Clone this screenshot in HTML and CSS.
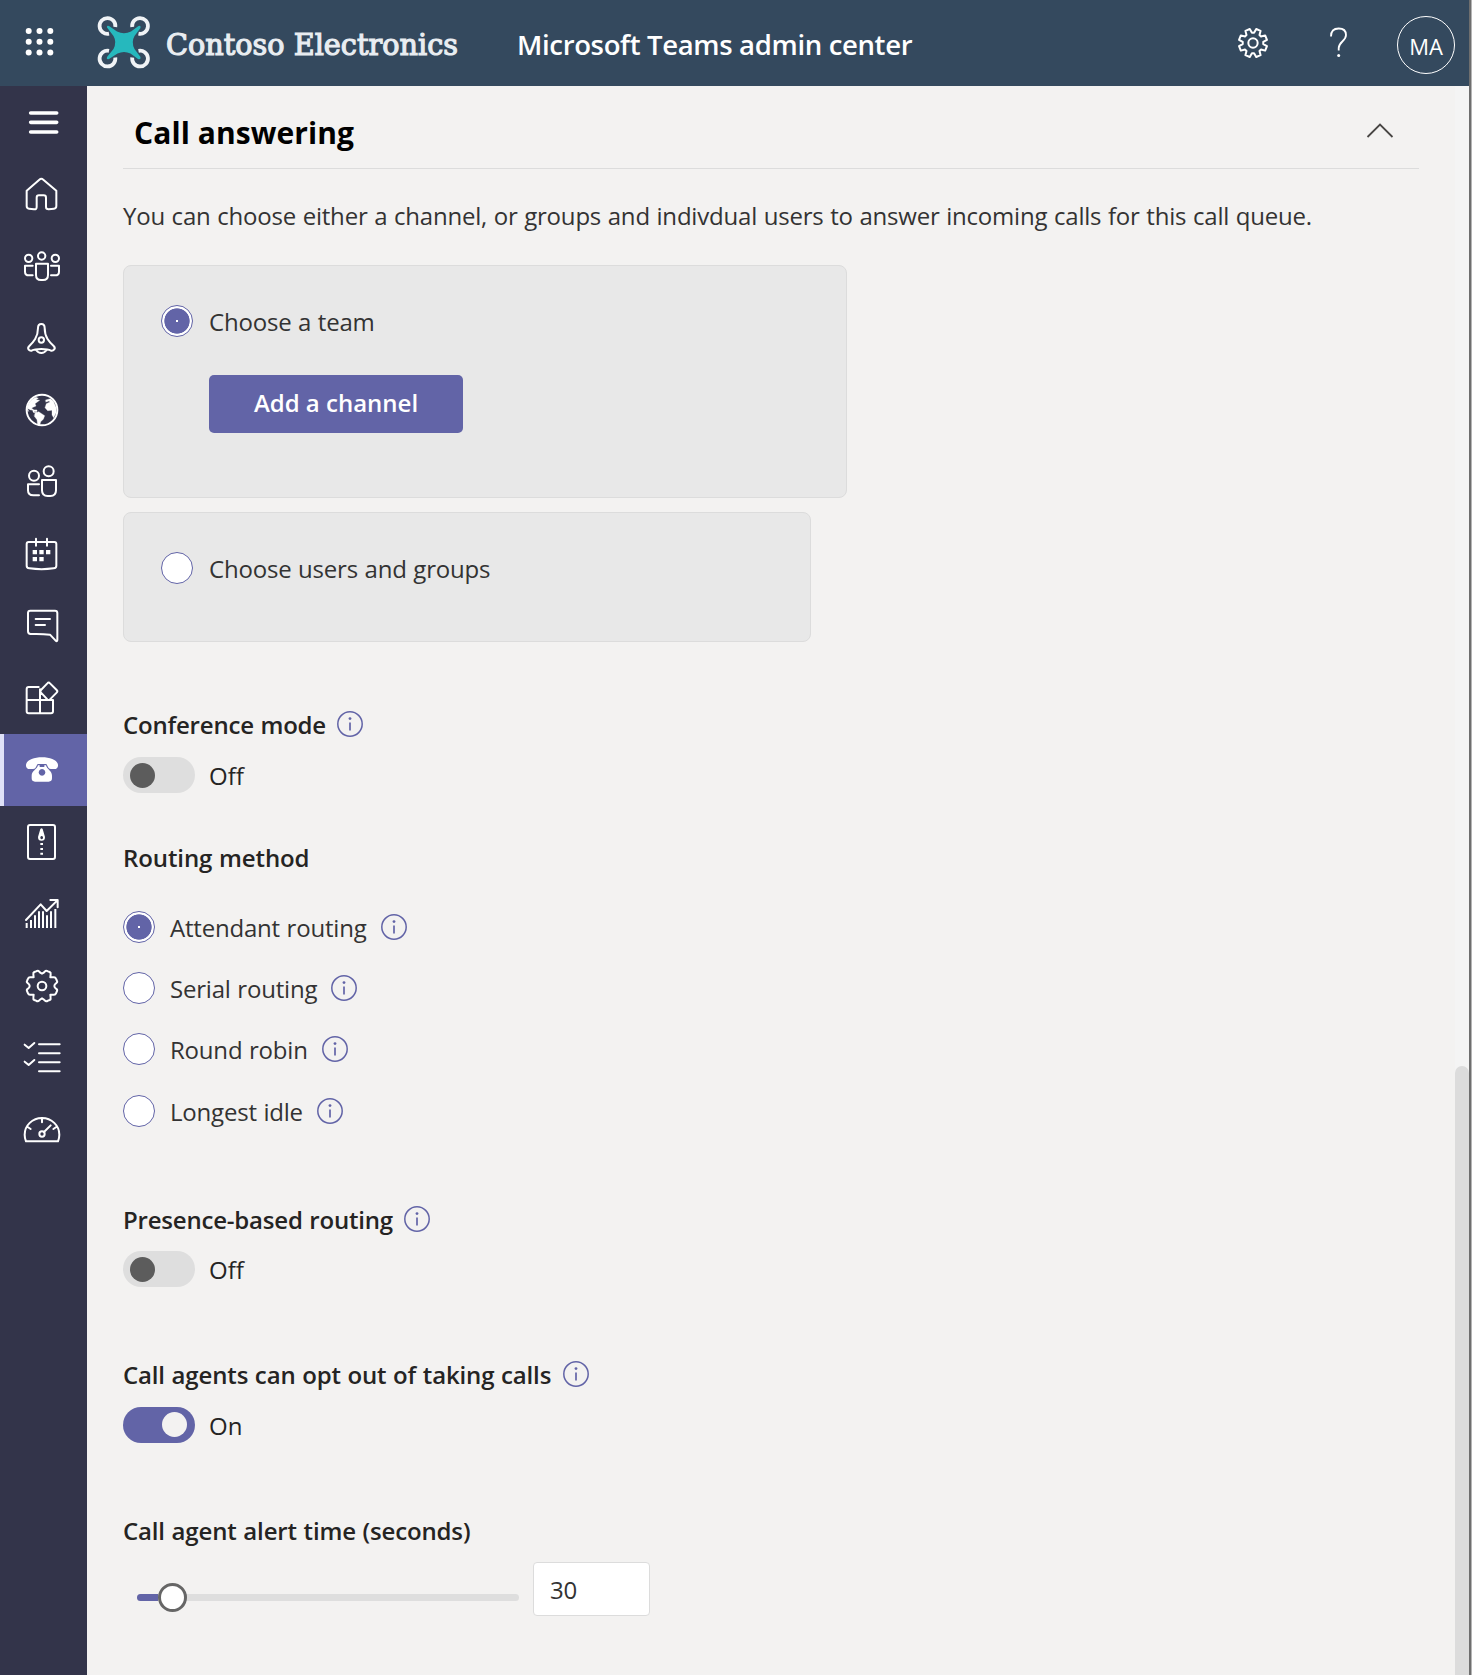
FILE: index.html
```html
<!DOCTYPE html>
<html lang="en">
<head>
<meta charset="utf-8">
<title>Microsoft Teams admin center</title>
<link rel="stylesheet" href="styles.css">
</head>
<body>
<svg width="0" height="0" class="defs"><defs>
<symbol id="info" viewBox="0 0 26 26"><circle cx="13" cy="13" r="12.2" fill="none" stroke="#6264a7" stroke-width="1.5"/><circle cx="13" cy="7.6" r="1.4" fill="#6264a7"/><path d="M13 11.5v8" stroke="#6264a7" stroke-width="1.7"/></symbol>
</defs></svg>
<div class="app">
<header class="topbar">
  <svg class="waffle" viewBox="0 0 87 86"><g fill="#fff"><circle cx="28.7" cy="31" r="3"/><circle cx="39.5" cy="31" r="3"/><circle cx="50.3" cy="31" r="3"/><circle cx="28.7" cy="41.7" r="3"/><circle cx="39.5" cy="41.7" r="3"/><circle cx="50.3" cy="41.7" r="3"/><circle cx="28.7" cy="52.5" r="3"/><circle cx="39.5" cy="52.5" r="3"/><circle cx="50.3" cy="52.5" r="3"/></g></svg>
  <svg class="logo" viewBox="0 0 400 86">
    <g fill="none" stroke="#f0f3f6" stroke-width="3.8"><path d="M22 33.700a7.900 7.900 0 1 1 6.300-6.700"/><path d="M51.500 33.700a7.900 7.900 0 1 0-6.300-6.700"/><path d="M22 50.800a7.900 7.900 0 1 0 6.300 6.700"/><path d="M51.500 50.800a7.900 7.900 0 1 1-6.300 6.700"/></g>
    <path fill="#26b8bd" d="M20 27.500Q19.500 25 22 26L30 31.500Q37 35 44 31.500L51.500 26Q54 25 53.500 28L47.500 36Q44 42 47.500 49L53.500 57Q54 60 51 59L43.500 53.500Q37 50.500 30.500 53.500L22 59Q19 60 20 57L26.500 49Q30 42 26.500 36Z"/>
    <text class="logo-text" x="79" y="54.500" textLength="292" lengthAdjust="spacingAndGlyphs">Contoso Electronics</text>
  </svg>
  <div class="product">Microsoft Teams admin center</div>
  <svg class="top-gear" viewBox="-48 -48 96 96"><path d="M3.200-30.800 9.700-41.900 22.800-36.500 19.500-24.100 24.100-19.500 36.500-22.800 41.900-9.700 30.800-3.200V3.200L41.900 9.700 36.500 22.800 24.100 19.500 19.500 24.100 22.800 36.500 9.700 41.900 3.200 30.800H-3.200L-9.700 41.900-22.800 36.500-19.500 24.100-24.100 19.500-36.500 22.800-41.900 9.700-30.800 3.200V-3.200L-41.900-9.700-36.500-22.800-24.100-19.500-19.500-24.100-22.800-36.500-9.700-41.900-3.200-30.800Z"/><circle r="14"/></svg>
  <svg class="help" viewBox="0 0 20 32"><path d="M2 9.500C2 4 5 1.500 9.700 1.500c4.500 0 7.300 2.500 7.300 6.500 0 6-7.300 7-7.300 13v2.500"/><circle cx="9.700" cy="28.500" r="1.500"/></svg>
  <div class="avatar">MA</div>
</header>
<nav class="rail">
  <svg class="item" viewBox="0 0 261 216"><path stroke-width="11" d="M92 81h78M92 109h78M92 138h78"/></svg>
  <svg class="item" viewBox="0 0 261 216"><path d="M80 98 118 65q6-5 12 0l39 33v46q0 7-7 8l-16 2q-8 0-8-7v-28q0-7-7-7h-14q-7 0-7 7v28q0 8-8 7l-15-2q-7-1-7-8Z"/></svg>
  <svg class="item" viewBox="0 0 261 216"><circle cx="86" cy="85" r="11"/><circle cx="125" cy="78" r="11"/><circle cx="166" cy="85" r="11"/><path d="M108 101h36v34q0 15-15 15h-6q-15 0-15-15ZM98 107H75v18q0 11 12 11h11M153 107h24v18q0 11-12 11h-12"/></svg>
  <svg class="item" viewBox="0 0 261 216"><path d="M114 78q0-12 10-12t10 12c0 28 14 42 27 54q6 6 1 11-3 4-9 3-9-5-29-5t-29 5q-6 1-9-3-4-5 2-11c12-12 26-26 26-54ZM109 145q5 8 15 8t15-8"/><circle cx="124" cy="114" r="8"/></svg>
  <svg class="item" viewBox="0 0 261 216"><circle cx="126" cy="108" r="46"/><path class="solid" d="M82 102q3-23 26-32l7 3-7 4 11 2-14 10 3 7-12 5-2 8-8-5-5 4 5 4ZM105 118l11-5 9 6 9 6-4 11-8 7-3 12-6-2-2-16-8-10ZM137 78l14-4 9 7 8 19v17l-7 14-5-8v-14l-13 1-8-9 4-12 11-5-3-3-9 3Z"/><path stroke-width="4" d="M88 104l10 2 3 8 9 0M100 109l10 0"/></svg>
  <svg class="item" viewBox="0 0 261 216"><circle cx="102" cy="89" r="15"/><circle cx="146" cy="76" r="15"/><path d="M126 102h42v31q0 17-17 17h-8q-17 0-17-17ZM117 115H84v18q0 15 16 15h17"/></svg>
  <svg class="item" viewBox="0 0 261 216"><path d="M86 72h77q6 0 6 6v65q0 7-8 8-36 5-73 0-8-1-8-8V78q0-6 6-6ZM108 62v21M141 62v21"/><path class="fill" d="M98 96h13v13H98zM118 96h13v13h-13zM138 96h13v13h-13zM98 117h13v13H98zM118 117h13v13h-13z"/></svg>
  <svg class="item" viewBox="0 0 261 216"><path d="M91 62h74q7 0 7 7v81q0 6-5 2l-17-18q-23-3-58-2-8 0-8-8V69q0-7 7-7ZM107 87h43M107 105h28"/></svg>
  <svg class="item" viewBox="0 0 261 216"><path d="M116 75H86q-6 0-6 6v67q0 6 6 6h67q6 0 6-6v-34H80M120 82v72M142 64q4-5 8 0l20 20q4 4 0 8l-20 20q-4 4-8 0l-19-20q-4-4 0-8Z"/></svg>
  <svg class="item active" viewBox="0 0 261 216"><path class="fill" d="M78 92c2-14 24-22 48-22s46 8 48 22c1 9-4 13-12 13h-9c-7 0-8-5-11-10-1-3-2-5-6-5h-20c-4 0-5 2-6 5-3 5-4 10-11 10h-9c-8 0-13-4-12-13Z"/><path class="fill" fill-rule="evenodd" d="M114 94h5v5h14v-5h5c3 12 18 17 18 31v8q0 10-10 10h-41q-10 0-10-10v-8c0-14 16-19 19-31ZM126 105a10 10 0 1 0 .1 0Z"/></svg>
  <svg class="item" viewBox="0 0 261 216"><rect x="84" y="57" width="81" height="102" rx="6"/><path class="fill" fill-rule="evenodd" d="M121 69q4-5 7 0l7 24a10 11 0 1 1-21 0ZM125 90a4 5 0 1 0 .1 0ZM121 111h8v6h-8zM121 126h8v6h-8zM121 140h8v6h-8z"/></svg>
  <svg class="item" viewBox="0 0 261 216"><path d="M78 126 122 79l18 20 32-32M151 66h22v22"/><path d="M80 150v-15M93 150v-24M105 150v-38M117 150v-50M129 150v-50M141 150v-38M153 150v-50M166 150V93" stroke-linecap="butt"/></svg>
  <svg class="item" viewBox="0 0 261 216"><g transform="translate(126 108)"><path d="M0-37Q6-40 9-44 12-48 18-44L23-42Q27-40 26-35L25-26 34-26Q40-27 42-22L45-15Q47-11 42-8 37-4 37 0 37 4 42 8 47 11 45 15L42 22Q40 27 34 26L25 26 26 35Q27 40 23 42L18 44Q12 48 9 44 6 40 0 37-6 40-9 44-12 48-18 44L-23 42Q-27 40-26 35L-25 26-34 26Q-40 27-42 22L-45 15Q-47 11-42 8-37 4-37 0-37-4-42-8-47-11-45-15L-42-22Q-40-27-34-26L-25-26-26-35Q-27-40-23-42L-18-44Q-12-48-9-44-6-40 0-37Z"/><circle r="13"/></g></svg>
  <svg class="item" viewBox="0 0 261 216"><path d="M74 68l12 10 17-15M74 119l12 10 17-15M117 67h62M117 94h62M117 121h62M117 148h62"/></svg>
  <svg class="item" viewBox="0 0 261 216"><path d="M78 142q-4-10-4-20a52 50 0 0 1 104 0q0 10-4 20ZM126 74v11M83 99l9 6M169 99l-9 6M132 114l20-20"/><circle cx="126" cy="120" r="8"/></svg>
</nav>
<main class="content">
  <div class="section-head"><h1>Call answering</h1><svg class="chevron" viewBox="0 0 28 16"><path d="M1.500 14 14 1.500 26.500 14"/></svg></div>
  <p class="intro">You can choose either a channel, or groups and indivdual users to answer incoming calls for this call queue.</p>
  <div class="card card-team">
    <div class="choice"><i class="radio on"></i><span>Choose a team</span></div>
    <button class="btn">Add a channel</button>
  </div>
  <div class="card card-users">
    <div class="choice"><i class="radio"></i><span>Choose users and groups</span></div>
  </div>
  <div class="label conference"><span>Conference mode</span><svg class="info"><use href="#info"/></svg></div>
  <div class="toggle-row"><i class="toggle"></i><span>Off</span></div>
  <div class="label routing"><span>Routing method</span></div>
  <div class="methods">
    <div class="choice"><i class="radio on"></i><span>Attendant routing</span><svg class="info"><use href="#info"/></svg></div>
    <div class="choice"><i class="radio"></i><span>Serial routing</span><svg class="info"><use href="#info"/></svg></div>
    <div class="choice"><i class="radio"></i><span>Round robin</span><svg class="info"><use href="#info"/></svg></div>
    <div class="choice"><i class="radio"></i><span>Longest idle</span><svg class="info"><use href="#info"/></svg></div>
  </div>
  <div class="label presence"><span>Presence-based routing</span><svg class="info"><use href="#info"/></svg></div>
  <div class="toggle-row"><i class="toggle"></i><span>Off</span></div>
  <div class="label optout"><span>Call agents can opt out of taking calls</span><svg class="info"><use href="#info"/></svg></div>
  <div class="toggle-row"><i class="toggle on"></i><span>On</span></div>
  <div class="label alert"><span>Call agent alert time (seconds)</span></div>
  <div class="slider-row"><div class="slider"><i class="slider-fill"></i><i class="thumb"></i></div><div class="num">30</div></div>
</main>
<div class="scroll"><i class="scroll-thumb"></i></div>
<div class="edge"></div>
</div>
</body>
</html>
```
FILE: styles.css
```css
* { box-sizing: border-box; }
body { margin: 0; background: #f3f2f1; font-family: "Open Sans", "Noto Sans", sans-serif; font-size: 24px; line-height: 34px; letter-spacing: -.2px; word-spacing: .6px; color: #333; }
.defs { position: absolute; }
.app { display: grid; grid-template-columns: 87px 1fr 14px 3px; grid-template-rows: 86px 1589px; width: 1472px; height: 1675px; overflow: hidden; }
.topbar { grid-column: 1 / 4; display: flex; align-items: center; background: #34495e; color: #fff; }
.waffle { width: 87px; height: 86px; flex: none; }
.logo { width: 400px; height: 86px; flex: none; }
.logo-text { font: 30px "DejaVu Serif", serif; letter-spacing: 0; word-spacing: 0; fill: #e9edf1; stroke: #e9edf1; stroke-width: 1.2px; }
.product { width: 734px; margin-left: 30px; font-size: 27.5px; font-weight: 600; letter-spacing: -.34px; word-spacing: 0; white-space: nowrap; padding-top: 3px; }
.top-gear { width: 32px; height: 32px; flex: none; margin: -1px 0 0 -14px; fill: none; stroke: #fff; stroke-width: 6; stroke-linejoin: round; }
.help { width: 20px; height: 32px; flex: none; margin-left: 60px; fill: none; stroke: #fff; stroke-width: 1.8; }
.help circle { fill: #fff; stroke: none; }
.avatar { width: 58px; height: 58px; flex: none; margin: 4px 0 0 48px; border: 1.5px solid #fff; border-radius: 50%; font-size: 22px; letter-spacing: 0; line-height: 58px; text-align: center; }
.rail { grid-column: 1; background: #33344a; display: flex; flex-direction: column; }
.item { width: 87px; height: 72px; flex: none; fill: none; stroke: #fff; stroke-width: 6; stroke-linecap: round; stroke-linejoin: round; }
.item .fill { fill: #fff; stroke: none; }
.item .solid { fill: #fff; stroke-width: 1; }
.active { background: linear-gradient(90deg, #dfe1f8 4px, #6264a7 4px); }
.content { width: 1296px; margin-left: 36px; }
.section-head { display: flex; justify-content: space-between; height: 83px; border-bottom: 1px solid #dcdcdc; padding: 30px 25px 0 11px; }
h1 { margin: 0; font-size: 30px; line-height: 34px; font-weight: 700; letter-spacing: .08px; word-spacing: 0; color: #000; }
.chevron { width: 28px; height: 16px; margin-top: 7px; fill: none; stroke: #484644; stroke-width: 1.8; }
.intro { margin: 30px 0 0; white-space: nowrap; }
.card { background: #e8e8e8; border: 1px solid #dcdcdc; border-radius: 8px; padding: 38px 0 0 37px; }
.card-team { width: 724px; height: 233px; margin-top: 32px; }
.card-users { width: 688px; height: 130px; margin-top: 14px; }
.choice { display: flex; align-items: center; height: 34px; white-space: nowrap; }
.choice span, .label span, .toggle-row span { padding-top: 2px; }
.radio { width: 32px; height: 32px; flex: none; margin-right: 15px; border: 1px solid #6264a7; border-radius: 50%; background: #fff; }
.card .radio { margin-right: 16px; }
.radio.on { background: radial-gradient(circle, #fff 0 .8px, #6264a7 1.2px 12.3px, #fff 13px); }
.btn { display: block; width: 254px; height: 58px; margin: 37px 0 0 48px; padding: 0; border: 0; border-radius: 5px; background: #6264a7; color: #fff; font: 600 24px/34px "Open Sans", "Noto Sans", sans-serif; letter-spacing: 0; padding-bottom: 2px; }
.info { width: 26px; height: 26px; flex: none; margin-left: 14px; }
.label { display: flex; align-items: center; height: 34px; font-weight: 600; letter-spacing: -.15px; color: #252423; white-space: nowrap; }
.label .info { margin-left: 11.5px; }
.conference { margin-top: 65px; letter-spacing: -.2px; }
.toggle-row { display: flex; align-items: center; height: 36px; margin-top: 16px; color: #252423; letter-spacing: 0; }
.toggle { width: 72px; height: 36px; margin-right: 14px; padding: 6px 8px 5px 7px; border-radius: 18px; background: #dedede; display: flex; }
.toggle::before { content: ""; width: 25px; height: 25px; border-radius: 50%; background: #5c5c5c; }
.toggle.on { background: #6264a7; justify-content: flex-end; padding-top: 5px; }
.toggle.on::before { background: #f3f2f1; }
.routing { margin-top: 47px; letter-spacing: -.1px; }
.methods { margin-top: 22.4px; }
.methods .choice { height: 61.2px; }
.presence { margin-top: 61px; letter-spacing: -.2px; }
.presence + .toggle-row { margin-top: 15px; }
.optout { margin-top: 70px; }
.alert { margin-top: 70px; }
.slider-row { display: flex; align-items: center; height: 54px; margin-top: 15px; }
.slider { display: flex; align-items: center; width: 382px; height: 7px; margin: 17px 14px 0; border-radius: 4px; background: #dedede; }
.slider-fill { width: 21px; height: 7px; border-radius: 4px 0 0 4px; background: #6264a7; }
.thumb { width: 29px; height: 29px; flex: none; border: 3px solid #666; border-radius: 50%; background: #fff; }
.num { width: 117px; height: 54px; padding-left: 16px; border: 1px solid #dcdcdc; border-radius: 4px; background: #fff; line-height: 54px; }
.scroll { grid-column: 3; grid-row: 2; background: #f4f4f4; padding-top: 980px; }
.scroll-thumb { display: block; height: 620px; border-radius: 7px; background: #dcdcdc; }
.edge { grid-column: 4; grid-row: 1 / 3; background: #6e6e6e; border-right: 1px solid #b5b5b5; }
```
